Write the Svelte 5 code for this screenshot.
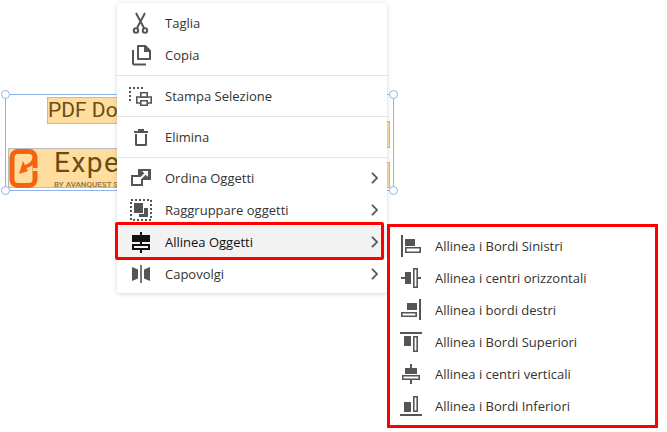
<script lang="ts">
  const submenu = [
    { label: 'Allinea i Bordi Sinistri', icon: 'left' },
    { label: 'Allinea i centri orizzontali', icon: 'hcenter' },
    { label: 'Allinea i bordi destri', icon: 'right' },
    { label: 'Allinea i Bordi Superiori', icon: 'top' },
    { label: 'Allinea i centri verticali', icon: 'vcenter' },
    { label: 'Allinea i Bordi Inferiori', icon: 'bottom' },
  ];
</script>

{#snippet chevron()}
  <svg class="chevron" width="8" height="12" viewBox="0 0 8 12">
    <path d="M1 .8l5 5.200-5 5.200" fill="none" stroke="#555" stroke-width="1.800" />
  </svg>
{/snippet}

{#snippet alignIcon(name)}
  <svg width="24" height="24" viewBox="0 0 24 24" fill="#555">
    {#if name === 'left'}
      <path d="M2 1h2v22H2zM6 5h10v7H6z" />
      <path d="M6.800 13.800h14.400v4.400H6.800z" fill="none" stroke="#555" stroke-width="1.600" />
    {:else if name === 'hcenter'}
      <path d="M2 11h4v2H2zM6 6h6v12H6zM19 11h3v2h-3z" />
      <path d="M14.800 2.800h3.400v18.400h-3.400z" fill="none" stroke="#555" stroke-width="1.600" />
    {:else if name === 'right'}
      <path d="M20 1h2v21h-2zM8 5h10v7H8z" />
      <path d="M2.800 14.800h14.400v3.400H2.800z" fill="none" stroke="#555" stroke-width="1.600" />
    {:else if name === 'top'}
      <path d="M1 2h22v2H1zM5 6h7v10H5z" />
      <path d="M14.800 6.800h3.400v14.400h-3.400z" fill="none" stroke="#555" stroke-width="1.600" />
    {:else if name === 'vcenter'}
      <path d="M11 2h2v4h-2zM6 6h12v6H6zM11 18h2v4h-2z" />
      <path d="M3.800 13.800h16.400v3.400H3.800z" fill="none" stroke="#555" stroke-width="1.600" />
    {:else}
      <path d="M1 20h22v2H1zM5 8h7v10H5z" />
      <path d="M14.800 2.800h3.400v14.400h-3.400z" fill="none" stroke="#555" stroke-width="1.600" />
    {/if}
  </svg>
{/snippet}

<div class="stage">
  <div class="selection">
    <span class="handle tl"></span>
    <span class="handle tr"></span>
    <span class="handle bl"></span>
    <span class="handle br"></span>
    <div class="title">PDF Do</div>
    <div class="span-a"></div>
    <div class="brand">
      <svg class="logo" width="29" height="39" viewBox="0 0 29 39">
        <rect x="3" y="2.500" width="23" height="34" rx="6" fill="none" stroke="#f4640f" stroke-width="5" />
        <path d="M24 19h5v3h-5z" fill="#fedd9f" />
        <path d="M25 9c0 5-4 7-9 9" fill="none" stroke="#f4640f" stroke-width="3.500" />
        <path d="M14 12L10 25l9-3z" fill="#f4640f" />
      </svg>
      <div class="brand-text">
        <span class="brand-name">Expe</span>
        <span class="brand-sub">BY AVANQUEST S</span>
      </div>
    </div>
    <div class="span-b"></div>
  </div>

  <div class="menu">
    <div class="group">
      <div class="item">
        <svg width="24" height="24" viewBox="0 0 24 24" fill="none" stroke="#555">
          <path d="M7 2l8 15M16 2L8 17" stroke-width="2" />
          <circle cx="7" cy="19.500" r="2.200" stroke-width="2" />
          <circle cx="16" cy="19.500" r="2.200" stroke-width="2" />
        </svg>
        <span>Taglia</span>
      </div>
      <div class="item">
        <svg width="24" height="24" viewBox="0 0 24 24" fill="none" stroke="#555" stroke-width="2">
          <path d="M4 7v13a1.500 1.500 0 0 0 1.500 1.500H17" />
          <path d="M9 3h7l5 5v8H9z" stroke-linejoin="round" />
          <path d="M15 2h1.500L22 7.500V9h-7z" fill="#555" stroke="none" />
        </svg>
        <span>Copia</span>
      </div>
    </div>
    <div class="group">
      <div class="item">
        <svg width="24" height="24" viewBox="0 0 24 24" fill="#555">
          <path d="M0 3h2v2H0zM4 3h2v2H4zM8 3h2v2H8zM12 3h2v2h-2zM0 7h2v2H0zM0 11h2v2H0zM0 15h2v2H0z" />
          <path d="M11.800 8.800h6.400v4.400h-6.400zM7.800 13h14.400v6H7.800z" fill="none" stroke="#555" stroke-width="1.600" />
          <path d="M11.800 16.800h6.400v4.400h-6.400z" fill="#fff" stroke="#555" stroke-width="1.600" />
        </svg>
        <span>Stampa Selezione</span>
      </div>
    </div>
    <div class="group">
      <div class="item">
        <svg width="24" height="24" viewBox="0 0 24 24" fill="#555">
          <path d="M5 6h14v2H5zM9 4h6v2H9z" />
          <path d="M7 9v10.500a.5.500 0 0 0 .5.500h9a.5.500 0 0 0 .5-.500V9" fill="none" stroke="#555" stroke-width="2" />
        </svg>
        <span>Elimina</span>
      </div>
    </div>
    <div class="group last">
      <div class="item">
        <svg width="24" height="24" viewBox="0 0 24 24" fill="#555">
          <path d="M9 3h13v11H9z" />
          <path d="M3 10h10v9H3z" fill="#fff" stroke="#555" stroke-width="2" />
          <path d="M9 15l8-8" fill="none" stroke="#fff" stroke-width="2" />
          <path d="M13 5h6v6z" fill="#fff" />
        </svg>
        <span>Ordina Oggetti</span>
        {@render chevron()}
      </div>
      <div class="item">
        <svg width="24" height="24" viewBox="0 0 24 24" fill="#555">
          <path d="M2 2h20v20H2z" fill="none" stroke="#555" stroke-width="2" stroke-dasharray="2 2" />
          <path d="M5 5h9v10H5z" />
          <path d="M15 10h4v9h-9v-3h5z" />
        </svg>
        <span>Raggruppare oggetti</span>
        {@render chevron()}
      </div>
      <div class="item hover">
        <svg width="24" height="24" viewBox="0 0 24 24" fill="#111">
          <path d="M11 2h2v3h-2zM3 5h18v7H3zM11 12h2v2h-2zM11 20h2v3h-2z" />
          <path d="M4 15h16v4H4z" fill="none" stroke="#111" stroke-width="2" />
        </svg>
        <span>Allinea Oggetti</span>
        {@render chevron()}
      </div>
      <div class="item">
        <svg width="24" height="24" viewBox="0 0 24 24" fill="#555">
          <path d="M11.200 3h1.600v18h-1.600zM3 5l6 2.500v9L3 19zM21 5l-6 2.500v9l6 2.500z" />
        </svg>
        <span>Capovolgi</span>
        {@render chevron()}
      </div>
    </div>
  </div>

  <div class="mark mark-item"></div>

  <div class="submenu">
    {#each submenu as entry}
      <div class="item">
        {@render alignIcon(entry.icon)}
        <span>{entry.label}</span>
      </div>
    {/each}
  </div>
</div>

<style>
  :global(body) {
    margin: 0;
    background: #fff;
  }

  .stage {
    position: relative;
    width: 667px;
    height: 432px;
    overflow: hidden;
    font-family: "Open Sans", "Noto Sans", sans-serif;
    font-size: 13px;
    color: #333;
  }

  .selection {
    position: absolute;
    left: 5px;
    top: 94px;
    width: 387px;
    height: 95px;
    border: 1px solid #8fb4e8;
  }

  .handle {
    position: absolute;
    z-index: 1;
    width: 7px;
    height: 7px;
    border: 1px solid #8fb4e8;
    border-radius: 50%;
    background: #fff;
  }

  .tl { left: -5px; top: -5px; }
  .tr { right: -5px; top: -5px; }
  .bl { left: -5px; bottom: -5px; }
  .br { right: -5px; bottom: -5px; }

  .title, .brand, .span-a, .span-b {
    position: absolute;
    box-sizing: border-box;
    background: #fedd9f;
    border: 1px solid #b9bdc0;
    white-space: nowrap;
  }

  .title {
    left: 41px;
    top: 2px;
    width: 200px;
    height: 27px;
    font-family: Roboto, sans-serif;
    font-size: 21px;
    line-height: 25px;
    color: #6b4d14;
  }

  .span-a {
    left: 200px;
    top: 26px;
    width: 184px;
    height: 27px;
  }

  .span-b {
    left: 200px;
    top: 67px;
    width: 184px;
    height: 26px;
  }

  .brand {
    left: 2px;
    top: 53px;
    width: 200px;
    height: 40px;
    display: flex;
    gap: 16px;
  }

  .logo {
    flex: none;
  }

  .brand-text {
    display: flex;
    flex-direction: column;
    color: #6b4d14;
    font-family: Roboto, sans-serif;
  }

  .brand-name {
    margin-top: -3px;
    font-size: 28px;
    line-height: 33px;
    letter-spacing: 1.500px;
  }

  .brand-sub {
    margin-top: 1px;
    font-size: 8px;
    line-height: 9px;
    font-weight: 500;
    color: #8a7444;
  }

  .menu, .submenu {
    position: absolute;
    background: #fff;
    box-sizing: border-box;
  }

  .menu {
    left: 117px;
    top: 3px;
    width: 270px;
    height: 290px;
    padding-top: 4px;
    border-radius: 4px;
    box-shadow: 0 1px 5px rgba(0, 0, 0, 0.16);
  }

  .group {
    padding-bottom: 4px;
    margin-bottom: 4px;
    border-bottom: 1px solid #e4e4e4;
  }

  .group.last {
    margin: 0;
    padding: 0;
    border: 0;
  }

  .item {
    display: flex;
    align-items: center;
    height: 32px;
    padding-left: 12px;
    padding-right: 8px;
  }

  .item svg:first-child {
    flex: none;
    margin-right: 12px;
    overflow: visible;
  }

  .item span {
    flex: 1;
    white-space: nowrap;
  }

  .chevron {
    flex: none;
  }

  .hover {
    background: #f2f2f2;
    color: #111;
  }

  .mark {
    position: absolute;
    box-sizing: border-box;
    border: 3px solid #f00;
    pointer-events: none;
  }

  .mark-item {
    left: 115px;
    top: 222px;
    width: 269px;
    height: 38px;
    border-radius: 2px;
  }

  .submenu {
    left: 387px;
    top: 224px;
    width: 271px;
    height: 204px;
    padding: 3px 0 0;
    border: 3px solid #f00;
  }

  .submenu .item {
    padding-left: 9px;
  }
</style>
